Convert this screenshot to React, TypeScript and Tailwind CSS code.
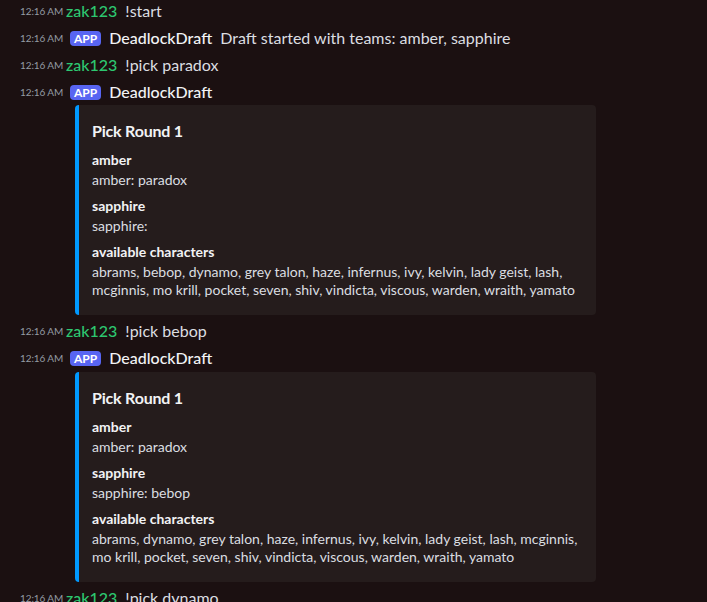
import React from "react";

const font = { fontFamily: 'Lato, "Noto Sans", sans-serif' };

function Row({ first, user, bot, text }: { first?: boolean; user: string; bot?: boolean; text?: string }) {
  return (
    <div className={`flex items-center h-[22px] ${first ? "" : "mt-[5px]"} pl-[20px] whitespace-nowrap`}>
      <span className="w-[43px] mr-[3px] shrink-0 text-[10px] text-[#949ba4] leading-[22px] tracking-[-0.1px]">12:16 AM</span>
      {bot && (
        <span className="ml-[4px] mr-[8px] h-[15px] px-[4px] rounded-[4px] bg-[#5865f2] text-white text-[12px] font-bold leading-[15px] flex items-center">
          APP
        </span>
      )}
      <span className={`text-[16px] font-medium leading-[22px] ${bot ? "text-[#f2f3f5]" : "text-[#2dc770]"}`}>{user}</span>
      {text && <span className="ml-[8px] text-[16px] text-[#dbdee1] leading-[22px]">{text}</span>}
    </div>
  );
}

function Field({ name, value, first }: { name: string; value: string; first?: boolean }) {
  return (
    <div className={first ? "" : "mt-[8px]"}>
      <div className="text-[14px] font-bold text-[#f2f3f5] leading-[18px]">{name}</div>
      <div className="mt-[2px] text-[14px] text-[#dbdee1] leading-[18px]">{value}</div>
    </div>
  );
}

function Embed({ sapphire, chars, top }: { sapphire: string; chars: string; top: string }) {
  return (
    <div className={`ml-[75px] w-[521px] ${top} rounded-[4px] bg-[#251c1c] border-l-[4px] border-[#0099ff] pt-[16px] pb-[16px] pl-[13px] pr-[16px]`}>
      <div className="text-[16px] font-bold text-[#f2f3f5] leading-[20px] tracking-[-0.2px]">Pick Round 1</div>
      <div className="mt-[10px]">
        <Field first name="amber" value="amber: paradox" />
        <Field name="sapphire" value={sapphire} />
        <Field name="available characters" value={chars} />
      </div>
    </div>
  );
}

export default function App() {
  return (
    <div className="w-[707px] h-[602px] overflow-hidden bg-[#1b1011]" style={font}>
      <Row first user="zak123" text="!start" />
      <Row bot user="DeadlockDraft" text="Draft started with teams: amber, sapphire" />
      <Row user="zak123" text="!pick paradox" />
      <Row bot user="DeadlockDraft" />
      <Embed
        top="mt-[2px] mb-[1px]"
        sapphire="sapphire:"
        chars="abrams, bebop, dynamo, grey talon, haze, infernus, ivy, kelvin, lady geist, lash, mcginnis, mo krill, pocket, seven, shiv, vindicta, viscous, warden, wraith, yamato"
      />
      <Row user="zak123" text="!pick bebop" />
      <Row bot user="DeadlockDraft" />
      <Embed
        top="mt-[3px] mb-[2px]"
        sapphire="sapphire: bebop"
        chars="abrams, dynamo, grey talon, haze, infernus, ivy, kelvin, lady geist, lash, mcginnis, mo krill, pocket, seven, shiv, vindicta, viscous, warden, wraith, yamato"
      />
      <Row user="zak123" text="!pick dynamo" />
    </div>
  );
}
